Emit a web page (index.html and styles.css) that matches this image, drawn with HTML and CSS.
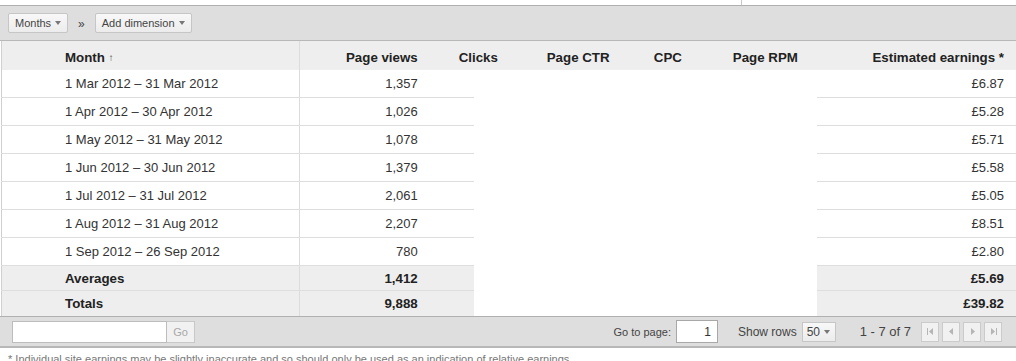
FILE: index.html
```html
<!DOCTYPE html>
<html>
<head>
<meta charset="utf-8">
<link rel="stylesheet" href="styles.css">
</head>
<body>
<div class="topstrip"><span class="topline"></span></div>
<div class="toolbar">
  <button class="tbtn">Months <span class="caret"></span></button>
  <span class="raquo">»</span>
  <button class="tbtn">Add dimension <span class="caret"></span></button>
</div>
<table class="report">
  <colgroup>
    <col class="c-month"><col class="c-pv"><col class="c-gap"><col class="c-clicks"><col class="c-ctr"><col class="c-cpc"><col class="c-rpm"><col class="c-earn">
  </colgroup>
  <thead>
    <tr>
      <th class="month">Month <span class="sort">&#8593;</span></th>
      <th class="pvh">Page views</th>
      <th class="lab clicks" colspan="2">Clicks</th>
      <th class="lab ctr">Page CTR</th>
      <th class="lab cpc">CPC</th>
      <th class="lab rpm">Page RPM</th>
      <th class="earn">Estimated earnings *</th>
    </tr>
  </thead>
  <tbody>
    <tr><td class="month">1 Mar 2012 – 31 Mar 2012</td><td class="pv" colspan="2">1,357</td><td class="blank" colspan="4"></td><td class="earn">£6.87</td></tr>
    <tr><td class="month">1 Apr 2012 – 30 Apr 2012</td><td class="pv" colspan="2">1,026</td><td class="blank" colspan="4"></td><td class="earn">£5.28</td></tr>
    <tr><td class="month">1 May 2012 – 31 May 2012</td><td class="pv" colspan="2">1,078</td><td class="blank" colspan="4"></td><td class="earn">£5.71</td></tr>
    <tr><td class="month">1 Jun 2012 – 30 Jun 2012</td><td class="pv" colspan="2">1,379</td><td class="blank" colspan="4"></td><td class="earn">£5.58</td></tr>
    <tr><td class="month">1 Jul 2012 – 31 Jul 2012</td><td class="pv" colspan="2">2,061</td><td class="blank" colspan="4"></td><td class="earn">£5.05</td></tr>
    <tr><td class="month">1 Aug 2012 – 31 Aug 2012</td><td class="pv" colspan="2">2,207</td><td class="blank" colspan="4"></td><td class="earn">£8.51</td></tr>
    <tr><td class="month">1 Sep 2012 – 26 Sep 2012</td><td class="pv" colspan="2">780</td><td class="blank" colspan="4"></td><td class="earn">£2.80</td></tr>
    <tr class="summary avg"><td class="month">Averages</td><td class="pv" colspan="2">1,412</td><td class="blank" colspan="4"></td><td class="earn">£5.69</td></tr>
    <tr class="summary tot"><td class="month">Totals</td><td class="pv" colspan="2">9,888</td><td class="blank" colspan="4"></td><td class="earn">£39.82</td></tr>
  </tbody>
</table>
<div class="footbar">
  <div class="search">
    <input class="sinput" type="text">
    <button class="gobtn">Go</button>
  </div>
  <div class="pager">
    <span class="plabel go">Go to page:</span>
    <input class="pinput" type="text" value="1">
    <span class="plabel rows">Show rows</span>
    <span class="rowsel">50 <span class="caret"></span></span>
    <span class="count">1 - 7 of 7</span>
    <span class="navs">
      <span class="nav"><svg width="9" height="9" viewBox="0 0 9 9"><rect x="1" y="1" width="1" height="7" fill="#b5b5b5"/><path d="M7 1 L3 4.5 L7 8 Z" fill="#b5b5b5"/></svg></span>
      <span class="nav"><svg width="9" height="9" viewBox="0 0 9 9"><path d="M6 1 L2 4.5 L6 8 Z" fill="#b5b5b5"/></svg></span>
      <span class="nav"><svg width="9" height="9" viewBox="0 0 9 9"><path d="M3 1 L7 4.5 L3 8 Z" fill="#b5b5b5"/></svg></span>
      <span class="nav"><svg width="9" height="9" viewBox="0 0 9 9"><path d="M2 1 L6 4.5 L2 8 Z" fill="#b5b5b5"/><rect x="7" y="1" width="1" height="7" fill="#b5b5b5"/></svg></span>
    </span>
  </div>
</div>
<p class="note">* Individual site earnings may be slightly inaccurate and so should only be used as an indication of relative earnings.</p>
</body>
</html>
```

FILE: styles.css
```css
html, body {
  margin: 0;
  padding: 0;
  background: #fff;
  font-family: "Liberation Sans", Arial, sans-serif;
  color: #333;
  width: 1016px;
  overflow: hidden;
}

.topstrip {
  height: 5px;
  border-bottom: 1px solid #b0b0b0;
  display: flex;
}
.topline {
  margin-left: 741px;
  width: 1px;
  background: #c8c8c8;
}

.toolbar {
  height: 35px;
  background: #dedede;
  border-bottom: 1px solid #b8b8b8;
  display: flex;
  align-items: center;
  padding-left: 8px;
  padding-bottom: 1px;
  box-sizing: border-box;
}
.tbtn {
  height: 20px;
  margin: 0;
  padding: 0 6px 0 6px;
  border: 1px solid #c6c6c6;
  border-radius: 2px;
  background: linear-gradient(#f8f8f8, #ececec);
  font-family: "Liberation Sans", Arial, sans-serif;
  font-size: 11px;
  color: #444;
  display: flex;
  align-items: center;
  gap: 4px;
}
.caret {
  display: inline-block;
  width: 0;
  height: 0;
  border-left: 3.5px solid transparent;
  border-right: 3.5px solid transparent;
  border-top: 4px solid #777;
  margin-top: 1px;
}
.raquo {
  font-size: 12px;
  color: #444;
  margin: 3px 10px 0 10px;
}

.report {
  border-collapse: collapse;
  table-layout: fixed;
  width: 1015px;
  margin-left: 1px;
  border-left: 1px solid #d0d0d0;
}
.c-month { width: 298px; }
.c-pv { width: 140px; }
.c-gap { width: 34px; }
.c-clicks { width: 66px; }
.c-ctr { width: 100px; }
.c-cpc { width: 80px; }
.c-rpm { width: 97px; }
.c-earn { width: 199px; }

.report th {
  height: 26px;
  padding: 3px 0 0 0;
  background: #eeeeee;
  font-size: 13.3px;
  font-weight: bold;
  color: #222;
  text-align: right;
  vertical-align: middle;
  white-space: nowrap;
}
.report th.month {
  text-align: left;
  padding-left: 63px;
  border-right: 1px solid #dcdcdc;
}
.sort {
  font-size: 10px;
  color: #444;
  position: relative;
  top: -1px;
}
.report th.pvh { padding-right: 22px; }
.report th.lab { text-align: left; }
.report th.clicks { padding-left: 19px; }
.report th.ctr { padding-left: 7px; }
.report th.cpc { padding-left: 14px; }
.report th.rpm { padding-left: 13px; }
.report .pv { padding-right: 56px; text-align: right; }
.report .earn { padding-right: 12px; text-align: right; }

.report td {
  height: 27px;
  padding-top: 0;
  padding-bottom: 0;
  font-size: 13px;
  color: #333;
  vertical-align: middle;
  border-bottom: 1px solid #dedede;
}
.report td.month {
  padding-left: 63px;
  border-right: 1px solid #dcdcdc;
}
.report td.blank {
  background: #fff;
  border-bottom: none;
}
.summary td {
  background: #eeeeee;
  font-weight: bold;
  color: #222;
  font-size: 13.3px;
}
.avg td { height: 24px; }
.tot td { height: 25px; border-bottom: none; }

.footbar {
  height: 29px;
  background: #dedede;
  border-top: 1px solid #b0b0b0;
  border-bottom: 2px solid #b8b8b8;
  display: flex;
  align-items: center;
  justify-content: space-between;
  padding: 0 14px 0 12px;
}
.search {
  display: flex;
  align-items: center;
}
.sinput {
  width: 155px;
  height: 22px;
  box-sizing: border-box;
  margin: 0;
  border: 1px solid #bdbdbd;
  background: #fff;
  padding: 0;
}
.gobtn {
  width: 28px;
  height: 22px;
  margin: 0;
  padding: 0;
  border: 1px solid #c8c8c8;
  border-left: none;
  background: #f1f1f1;
  color: #a8a8a8;
  font-size: 11px;
  font-family: "Liberation Sans", Arial, sans-serif;
}
.pager {
  display: flex;
  align-items: center;
}
.plabel {
  font-size: 12px;
  color: #444;
}
.plabel.go { font-size: 11px; }
.pinput {
  width: 42px;
  height: 23px;
  box-sizing: border-box;
  margin: 0 0 0 5px;
  border: 1px solid #a8a8a8;
  background: #fff;
  text-align: right;
  padding: 0 6px;
  font-size: 12px;
  font-family: "Liberation Sans", Arial, sans-serif;
  color: #333;
}
.rows { margin-left: 20px; }
.rowsel {
  margin-left: 5px;
  width: 34px;
  height: 20px;
  box-sizing: border-box;
  padding: 0 5px 0 4px;
  border: 1px solid #c6c6c6;
  background: linear-gradient(#f8f8f8, #ececec);
  font-size: 12px;
  color: #444;
  display: flex;
  align-items: center;
  justify-content: space-between;
}
.count {
  margin-left: 24px;
  font-size: 13px;
  color: #444;
}
.navs {
  margin-left: 10px;
  display: flex;
  gap: 3px;
}
.nav {
  width: 16px;
  height: 18px;
  border: 1px solid #cbcbcb;
  background: #f1f1f1;
  display: flex;
  align-items: center;
  justify-content: center;
}

.note {
  margin: 5px 0 0 8px;
  font-size: 11px;
  color: #777;
  white-space: nowrap;
}
```
